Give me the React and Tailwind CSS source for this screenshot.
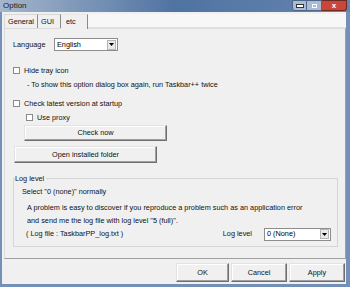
export default function App() {
  const font = { fontFamily: '"Liberation Sans", Arial, sans-serif' };
  const Check = () => (
    <span className="inline-block w-[7px] h-[7px] border border-[#8a8a8a] bg-white shrink-0" />
  );
  const Combo = ({ w, text }) => (
    <div className={`flex items-center h-[13px] ${w} border border-[#8d8d8d] bg-white`}>
      <span className="flex-1 pl-[2px] text-[7.3px] leading-none text-black">{text}</span>
      <span className="w-[9px] h-[10px] mr-[1px] border border-[#b5b5b5] bg-[#e9e9e9] flex items-center justify-center">
        <svg width="5" height="3" viewBox="0 0 5 3"><path d="M0 0h5L2.5 3z" fill="#000" /></svg>
      </span>
    </div>
  );
  const Btn = ({ cls, children }) => (
    <div className={`flex items-center justify-center bg-[#f0f0f0] border border-t-[#e3e3e3] border-l-[#e3e3e3] border-r-[#6f6f6f] border-b-[#6f6f6f] shadow-[inset_-1px_-1px_0_#a0a0a0,inset_1px_1px_0_#ffffff] text-[7.3px] leading-none text-[#111] ${cls}`}>
      {children}
    </div>
  );
  return (
    <div style={font} className="w-[350px] h-[287px] bg-[#7290b8] flex flex-col overflow-hidden">
      {/* title bar */}
      <div className="h-[12px] flex items-start bg-gradient-to-r from-[#a6b6cb] via-[#4f73a2] to-[#6585ae] relative">
        <span className="ml-[3px] mt-[2px] text-[8px] leading-none text-[#1a1a1a]">Option</span>
        <div className="ml-auto flex mr-[3px]">
          <div className="w-[15px] h-[11px] border border-[#4e6688] bg-[#a9bcd3] rounded-bl-[3px] flex items-end justify-center pb-[2px]">
            <span className="block w-[6px] h-[2px] bg-white border border-[#333] box-content" />
          </div>
          <div className="w-[15px] h-[11px] border-y border-r border-[#4e6688] bg-[#a9bcd3] flex items-center justify-center">
            <span className="block w-[5px] h-[4px] border border-white" />
          </div>
          <div className="w-[25px] h-[11px] border-y border-r border-[#6b2a22] bg-[#c9473a] rounded-br-[3px] flex items-center justify-center text-white text-[8px] font-bold leading-none">
            x
          </div>
        </div>
      </div>
      {/* body */}
      <div className="flex-1 ml-[2px] mr-[4px] mb-[3px] bg-[#f0f0f0] flex flex-col">
        {/* tabs */}
        <div className="h-[16px] flex items-end pl-[2px] bg-[#f0f0f0]">
          <div className="h-[14px] px-[3px] flex items-center border-t border-l border-[#d8d8d8] border-r border-r-[#8a8a8a] bg-[#f0f0f0] text-[7.3px] leading-none text-[#111]">General</div>
          <div className="h-[14px] w-[23px] pl-[3px] flex items-center border-t border-[#d8d8d8] border-r border-r-[#8a8a8a] bg-[#f0f0f0] text-[7.3px] leading-none text-[#111]">GUI</div>
          <div className="h-[15px] w-[27px] pl-[5px] flex items-start pt-[3px] border-t border-[#e8e8e8] border-r border-r-[#8a8a8a] bg-[#f0f0f0] text-[7.3px] leading-none text-[#111] relative top-[1px]">etc</div>
          <div className="flex-1 h-[14px] bg-[#f7f7f7] border-b border-[#e0e0e0]" />
        </div>
        {/* panel */}
        <div className="ml-[2px] h-[231px] border border-[#dcdcdc] border-r-[#a0a0a0] border-b-[#a0a0a0] flex flex-col px-[8px] text-[7.3px] leading-none text-[#111]">
          <div className="mt-[9px] h-[13px] flex items-center">
            <span className="w-[41px]">Language</span>
            <Combo w="w-[64px]" text="English" />
          </div>
          <div className="mt-[15px] h-[9px] flex items-center gap-[4px]">
            <Check />
            <span>Hide tray icon</span>
          </div>
          <div className="mt-[5px] h-[9px] flex items-center pl-[14px]">
            - To show this option dialog box again, run Taskbar++ twice
          </div>
          <div className="mt-[10px] h-[9px] flex items-center gap-[4px]">
            <Check />
            <span>Check latest version at startup</span>
          </div>
          <div className="mt-[5px] h-[9px] flex items-center gap-[4px] pl-[13px]">
            <Check />
            <span>Use proxy</span>
          </div>
          <div className="mt-[3px] pl-[11px]">
            <Btn cls="w-[143px] h-[16px]">Check now</Btn>
          </div>
          <div className="mt-[5px] pl-[1px]">
            <Btn cls="w-[143px] h-[17px]">Open installed folder</Btn>
          </div>
          {/* group box */}
          <div className="mt-[15px] mr-[-1px] h-[69px] border border-[#d5d5d5] relative px-[8px]">
            <span className="absolute left-[1px] top-[-4px] bg-[#f0f0f0] pr-[2px]">Log level</span>
            <div className="mt-[9px] h-[8px] flex items-center">Select "0 (none)" normally</div>
            <div className="mt-[8px] h-[8px] flex items-center pl-[5px]">A problem is easy to discover if you reproduce a problem such as an application error</div>
            <div className="mt-[5px] h-[8px] flex items-center pl-[5px]">and send me the log file with log level "5 (full)".</div>
            <div className="mt-[1px] h-[16px] flex items-center pl-[4px]">
              <span>( Log file : TaskbarPP_log.txt )</span>
              <span className="ml-auto mr-[12px]">Log level</span>
              <div className="mr-[-2px]">
                <Combo w="w-[67px]" text="0 (None)" />
              </div>
            </div>
          </div>
        </div>
        {/* bottom buttons */}
        <div className="mt-[4px] flex justify-end gap-[2px] pr-[1px]">
          <Btn cls="w-[53px] h-[19px]">OK</Btn>
          <Btn cls="w-[56px] h-[19px]">Cancel</Btn>
          <Btn cls="w-[56px] h-[19px]">Apply</Btn>
        </div>
      </div>
    </div>
  );
}
